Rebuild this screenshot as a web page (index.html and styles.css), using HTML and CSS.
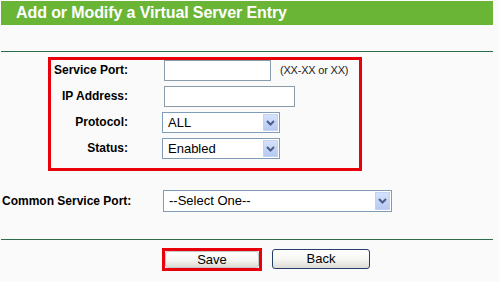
FILE: index.html
```html
<!DOCTYPE html>
<html>
<head>
<meta charset="utf-8">
<link rel="stylesheet" href="styles.css">
</head>
<body>
<div class="page">
  <div class="header"><h1 class="title">Add or Modify a Virtual Server Entry</h1></div>
  <div class="rule rule-top"></div>
  <section class="group">
    <div class="label">Service Port:</div>
    <div class="field"><input class="text short" type="text"><span class="hint">(XX-XX or XX)</span></div>
    <div class="label">IP Address:</div>
    <div class="field"><input class="text long" type="text"></div>
    <div class="label">Protocol:</div>
    <div class="field"><div class="select small"><span class="value">ALL</span><span class="arrow"><svg width="9" height="6" viewBox="0 0 9 6"><path d="M1 1 L4.5 4.5 L8 1" fill="none" stroke="#4a5f88" stroke-width="2"/></svg></span></div></div>
    <div class="label">Status:</div>
    <div class="field"><div class="select small"><span class="value">Enabled</span><span class="arrow"><svg width="9" height="6" viewBox="0 0 9 6"><path d="M1 1 L4.5 4.5 L8 1" fill="none" stroke="#4a5f88" stroke-width="2"/></svg></span></div></div>
  </section>
  <div class="common">
    <div class="common-label">Common Service Port:</div>
    <div class="select wide"><span class="value">--Select One--</span><span class="arrow"><svg width="9" height="6" viewBox="0 0 9 6"><path d="M1 1 L4.5 4.5 L8 1" fill="none" stroke="#4a5f88" stroke-width="2"/></svg></span></div>
  </div>
  <div class="rule rule-bottom"></div>
  <div class="actions">
    <div class="highlight"><button class="btn btn-save" type="button">Save</button></div>
    <button class="btn btn-back" type="button">Back</button>
  </div>
</div>
</body>
</html>
```
FILE: styles.css
```css
html, body {
  margin: 0;
  padding: 0;
  background: #fafafa;
}
body {
  font-family: "Liberation Sans", Arial, sans-serif;
  color: #000;
}
.page {
  width: 492px;
  margin-left: 1px;
  padding-top: 1px;
}
.header {
  height: 24px;
  background: #6ab536;
  display: flex;
  align-items: center;
}
.title {
  margin: 0 0 0 15px;
  font-size: 16px;
  font-weight: bold;
  color: #fff;
  line-height: 20px;
  letter-spacing: -0.1px;
}
.rule {
  height: 1px;
  background: #2f6b4c;
}
.rule-top {
  margin-top: 26px;
}
.group {
  margin: 5px 0 0 47px;
  width: 308px;
  border: 3px solid #e8000b;
  padding: 0 0 4px 0;
  display: grid;
  grid-template-columns: 77px 1fr;
  grid-auto-rows: 26px;
  column-gap: 34px;
}
.label {
  font-size: 12px;
  font-weight: bold;
  text-align: right;
  line-height: 21px;
  height: 21px;
  white-space: nowrap;
}
.field {
  display: flex;
  align-items: flex-start;
}
.text {
  box-sizing: border-box;
  height: 21px;
  margin: 0 0 0 2px;
  padding: 0 3px;
  border: 1px solid #8a9bab;
  background: #fff;
  font: 13px "Liberation Sans", Arial, sans-serif;
}
.text.short { width: 107px; }
.text.long { width: 131px; }
.hint {
  margin-left: 9px;
  font-size: 11px;
  line-height: 21px;
  color: #222;
  letter-spacing: -0.2px;
}
.select {
  box-sizing: border-box;
  height: 21px;
  border: 1px solid #7f9db9;
  background: #fff;
  display: flex;
  align-items: stretch;
  padding: 1px;
}
.select.small { width: 118px; }
.select.wide { width: 229px; height: 22px; }
.value {
  flex: 1;
  font-size: 13px;
  line-height: 17px;
  padding-left: 4px;
}
.arrow {
  width: 15px;
  display: flex;
  align-items: center;
  justify-content: center;
  background: linear-gradient(#d6e2fb, #b7c9f3);
  border: 1px solid #c5d3f3;
  box-sizing: border-box;
}
.common {
  margin-top: 19px;
  display: flex;
  align-items: center;
  height: 22px;
}
.common-label {
  width: 161px;
  padding-left: 1px;
  font-size: 12px;
  font-weight: bold;
}
.rule-bottom {
  margin-top: 27px;
}
.actions {
  margin-top: 8px;
  padding-left: 161px;
  display: flex;
  align-items: flex-start;
  gap: 10px;
}
.highlight {
  border: 3px solid #e8000b;
  display: flex;
}
.btn {
  box-sizing: border-box;
  font: 13px "Liberation Sans", Arial, sans-serif;
  color: #000;
  border: 1px solid #24406a;
  border-radius: 3px;
  background: linear-gradient(#ffffff 0%, #f5f5f1 55%, #dddcd5 100%);
  padding: 0;
  line-height: 16px;
}
.btn-save {
  width: 94px;
  height: 17px;
  border-color: #c7c7c7;
}
.btn-back {
  width: 98px;
  height: 20px;
  margin-top: 1px;
}
```
